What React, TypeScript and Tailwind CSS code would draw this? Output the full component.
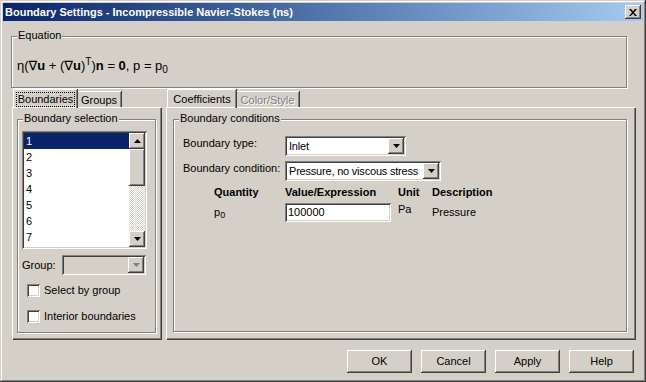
const raised =
  "shadow-[inset_-1px_-1px_#404040,inset_1px_1px_#ffffff,inset_-2px_-2px_#808080,inset_2px_2px_#d4d0c8]";
const sunken =
  "shadow-[inset_1px_1px_#808080,inset_-1px_-1px_#ffffff,inset_2px_2px_#404040,inset_-2px_-2px_#d4d0c8]";
const etched = "border border-[#808080] shadow-[inset_1px_1px_#ffffff,1px_1px_#ffffff]";

const DownArrow = ({ disabled = false }: { disabled?: boolean }) => (
  <svg width="7" height="4" viewBox="0 0 7 4">
    <path d="M0 0h7L3.5 4z" fill={disabled ? "#808080" : "#000"} />
  </svg>
);

const UpArrow = () => (
  <svg width="7" height="4" viewBox="0 0 7 4">
    <path d="M0 4h7L3.5 0z" fill="#000" />
  </svg>
);

const GroupBox = ({
  label,
  className,
  children,
}: {
  label: string;
  className: string;
  children?: React.ReactNode;
}) => (
  <div className={`relative ${etched} ${className}`}>
    <span className="absolute -top-[8px] left-[5px] bg-[#d4d0c8] px-[1px] leading-[13px]">{label}</span>
    {children}
  </div>
);

const Combo = ({
  value,
  className,
  disabled = false,
}: {
  value?: string;
  className: string;
  disabled?: boolean;
}) => (
  <div
    className={`flex items-center p-[2px] ${sunken} ${disabled ? "bg-[#d4d0c8]" : "bg-white"} ${className}`}
  >
    <span className="flex-1 overflow-hidden whitespace-nowrap pl-[2px] leading-[13px] tracking-[-0.2px]">{value}</span>
    <div className={`flex h-[16px] w-[16px] shrink-0 items-center justify-center bg-[#d4d0c8] ${raised}`}>
      <DownArrow disabled={disabled} />
    </div>
  </div>
);

const Checkbox = ({ label }: { label: string }) => (
  <div className="flex items-center gap-[4px]">
    <div className={`h-[13px] w-[13px] bg-white ${sunken}`} />
    <span className="leading-[13px]">{label}</span>
  </div>
);

const Button = ({ label }: { label: string }) => (
  <button className={`h-[23px] w-[65px] bg-[#d4d0c8] ${raised} leading-[13px]`}>{label}</button>
);

export default function App() {
  return (
    <div
      className={`flex h-[382px] w-[646px] flex-col bg-[#d4d0c8] p-[3px] text-[11px] text-black shadow-[inset_-1px_-1px_#404040,inset_1px_1px_#d4d0c8,inset_-2px_-2px_#808080,inset_2px_2px_#ffffff] font-['Liberation_Sans',Arial,sans-serif]`}
    >
      {/* title bar */}
      <div className="flex h-[18px] items-center justify-between bg-gradient-to-r from-[#0a246a] to-[#a6caf0] pl-[2px] pr-[2px]">
        <span className="text-[11px] font-bold leading-[13px] text-white">
          Boundary Settings - Incompressible Navier-Stokes (ns)
        </span>
        <div className={`flex h-[14px] w-[16px] items-center justify-center bg-[#d4d0c8] ${raised}`}>
          <svg width="8" height="7" viewBox="0 0 8 7">
            <path d="M0 0h2l2 2.3L6 0h2L5 3.5 8 7H6L4 4.7 2 7H0l3-3.5z" fill="#000" />
          </svg>
        </div>
      </div>

      <div className="flex flex-1 flex-col pl-[8px] pr-[8px]">
        {/* equation */}
        <GroupBox label="Equation" className="mt-[15px] h-[52px] w-[616px]">
          <div className="pl-[5px] pt-[21px] text-[13px] leading-[15px] font-['Liberation_Sans','DejaVu_Sans',sans-serif]">
            η(∇<b>u</b> + (∇<b>u</b>)<sup className="text-[10px]">T</sup>)<b>n</b> = <b>0</b>, p = p
            <sub className="text-[10px]">0</sub>
          </div>
        </GroupBox>

        <div className="mt-[1px] flex gap-[5px] pl-[1px]">
          {/* left tabs */}
          <div className="flex w-[149px] flex-col">
            <div className="flex h-[18px] items-end">
              <div className="relative z-10 -mb-[1px] ml-[1px] flex h-[19px] w-[64px] items-start justify-center border-l border-t border-white pt-[2px] shadow-[inset_-1px_0_#808080,1px_0_#404040]">
                <span className="border border-dotted border-black px-[1px] leading-[13px]">Boundaries</span>
              </div>
              <div className="flex h-[16px] w-[44px] items-start justify-center border-t border-white pt-[2px] shadow-[inset_-1px_0_#808080,1px_0_#404040]">
                <span className="leading-[13px]">Groups</span>
              </div>
            </div>
            <div className="h-[232px] border-l border-t border-white px-[4px] pt-[11px] shadow-[inset_-1px_-1px_#808080,1px_1px_#404040]">
              <GroupBox label="Boundary selection" className="h-[214px] w-[139px] pl-[4px] pt-[11px]">
                <div className="flex h-[118px] w-[125px] bg-white p-[2px] shadow-[inset_1px_1px_#808080,inset_-1px_-1px_#ffffff,inset_2px_2px_#404040,inset_-2px_-2px_#d4d0c8]">
                  <div className="flex-1">
                    {["1", "2", "3", "4", "5", "6", "7"].map((n, i) => (
                      <div
                        key={n}
                        className={`h-[16px] pl-[2px] leading-[16px] ${i === 0 ? "bg-[#0a246a] text-white" : ""}`}
                      >
                        {n}
                      </div>
                    ))}
                  </div>
                  <div className="flex w-[16px] flex-col">
                    <div className={`flex h-[16px] items-center justify-center bg-[#d4d0c8] ${raised}`}>
                      <UpArrow />
                    </div>
                    <div className={`h-[37px] bg-[#d4d0c8] ${raised}`} />
                    <div className="flex-1 bg-[repeating-conic-gradient(#ffffff_0_25%,#d4d0c8_0_50%)] bg-[length:2px_2px]" />
                    <div className={`flex h-[16px] items-center justify-center bg-[#d4d0c8] ${raised}`}>
                      <DownArrow />
                    </div>
                  </div>
                </div>
                <div className="mt-[6px] flex items-center">
                  <span className="w-[40px] leading-[13px]">Group:</span>
                  <Combo className="h-[20px] w-[84px]" disabled />
                </div>
                <div className="mt-[9px] flex flex-col gap-[13px] pl-[5px]">
                  <Checkbox label="Select by group" />
                  <Checkbox label="Interior boundaries" />
                </div>
              </GroupBox>
            </div>
          </div>

          {/* right tabs */}
          <div className="flex w-[469px] flex-col">
            <div className="flex h-[18px] items-end">
              <div className="relative z-10 -mb-[1px] ml-[1px] flex h-[19px] w-[69px] items-start justify-center border-l border-t border-white pt-[3px] shadow-[inset_-1px_0_#808080,1px_0_#404040]">
                <span className="leading-[13px]">Coefficients</span>
              </div>
              <div className="flex h-[16px] w-[63px] items-start justify-center border-t border-white pt-[2px] shadow-[inset_-1px_0_#808080,1px_0_#404040]">
                <span className="leading-[13px] text-[#808080] [text-shadow:1px_1px_0_#ffffff]">Color/Style</span>
              </div>
            </div>
            <div className="h-[232px] border-l border-t border-white pl-[6px] pt-[11px] shadow-[inset_-1px_-1px_#808080,1px_1px_#404040]">
              <GroupBox label="Boundary conditions" className="h-[213px] w-[454px] pl-[9px] pt-[16px]">
                <div className="flex items-start">
                  <span className="w-[102px] pt-[1px] leading-[13px]">Boundary type:</span>
                  <Combo value="Inlet" className="h-[20px] w-[121px]" />
                </div>
                <div className="mt-[5px] flex items-start">
                  <span className="w-[102px] pt-[1px] leading-[13px]">Boundary condition:</span>
                  <Combo value="Pressure, no viscous stress" className="h-[20px] w-[156px]" />
                </div>
                <div className="mt-[5px] flex pl-[31px] font-bold leading-[13px]">
                  <span className="w-[71px]">Quantity</span>
                  <span className="w-[113px]">Value/Expression</span>
                  <span className="w-[34px]">Unit</span>
                  <span>Description</span>
                </div>
                <div className="mt-[4px] flex items-start pl-[31px]">
                  <span className="w-[71px] pt-[3px] leading-[13px]">
                    p<sub className="text-[9px]">0</sub>
                  </span>
                  <div className={`h-[19px] w-[106px] bg-white pl-[3px] pt-[3px] leading-[13px] ${sunken}`}>100000</div>
                  <span className="ml-[7px] w-[34px] leading-[13px]">Pa</span>
                  <span className="pt-[3px] leading-[13px]">Pressure</span>
                </div>
              </GroupBox>
            </div>
          </div>
        </div>

        {/* buttons */}
        <div className="mt-[11px] flex justify-end gap-[9px] pr-[1px]">
          <Button label="OK" />
          <Button label="Cancel" />
          <Button label="Apply" />
          <Button label="Help" />
        </div>
      </div>
    </div>
  );
}
